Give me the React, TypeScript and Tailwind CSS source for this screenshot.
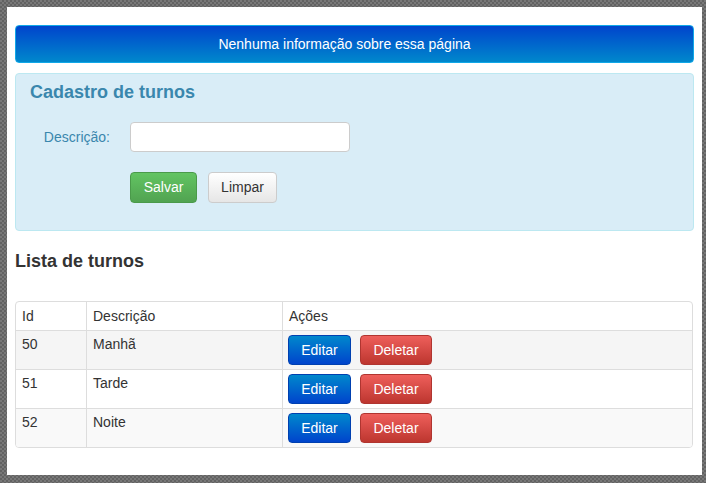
import React from 'react';

const turnos = [
  { id: 50, descricao: 'Manhã', bg: 'bg-[#f5f5f5]' },
  { id: 51, descricao: 'Tarde', bg: 'bg-white' },
  { id: 52, descricao: 'Noite', bg: 'bg-[#f9f9f9]' },
];

export default function App() {
  return (
    <div className="w-[706px] h-[483px] p-[7px] pr-[4px] pb-[8px] bg-[#6d6d6d] bg-[image:repeating-conic-gradient(#626262_0_25%,#787878_0_50%)] bg-[length:4px_4px] font-['Liberation_Sans',Arial,sans-serif] text-[14px] text-[#333]">
      <div className="h-full bg-white px-[8px] pt-[18px]">
        <div className="h-[38px] flex items-center justify-center pr-[20px] rounded-[4px] border border-[#10a8e8] bg-[linear-gradient(to_bottom,#0044cc,#0088cc)] text-white">
          Nenhuma informação sobre essa página
        </div>

        <div className="mt-[10px] h-[158px] rounded-[4px] border border-[#bce8f1] bg-[#d9edf7] px-[14px] pt-[6px]">
          <h2 className="text-[18px] font-bold text-[#3a87ad] leading-[24px]">Cadastro de turnos</h2>
          <div className="mt-[18px] flex items-center">
            <label className="w-[100px] text-right pr-[20px] text-[#3a87ad]">Descrição:</label>
            <input className="w-[220px] h-[30px] rounded-[4px] border border-[#ccc] bg-white outline-none" />
          </div>
          <div className="mt-[20px] ml-[100px] flex gap-[11px]">
            <button className="w-[67px] h-[31px] rounded-[4px] border border-[#4a9a4a] bg-[linear-gradient(to_bottom,#62c462,#51a351)] text-white">
              Salvar
            </button>
            <button className="w-[69px] h-[31px] rounded-[4px] border border-[#ccc] bg-[linear-gradient(to_bottom,#ffffff,#e6e6e6)] text-[#333]">
              Limpar
            </button>
          </div>
        </div>

        <h2 className="mt-[18px] text-[18px] font-bold leading-[24px] text-[#333]">Lista de turnos</h2>

        <table className="mt-[28px] w-[678px] border-separate border-spacing-0 rounded-[4px] border border-[#ddd] overflow-hidden">
          <thead>
            <tr className="h-[28px]">
              <th className="w-[70px] text-left font-normal px-[6px] align-middle">Id</th>
              <th className="w-[196px] text-left font-normal px-[6px] border-l border-[#ddd] align-middle">Descrição</th>
              <th className="text-left font-normal px-[6px] border-l border-[#ddd] align-middle">Ações</th>
            </tr>
          </thead>
          <tbody>
            {turnos.map((t) => (
              <tr key={t.id} className={`h-[39px] ${t.bg}`}>
                <td className="px-[6px] pt-[3px] align-top border-t border-[#ddd]">{t.id}</td>
                <td className="px-[6px] pt-[3px] align-top border-t border-l border-[#ddd]">{t.descricao}</td>
                <td className="px-[5px] pt-[4px] pb-[4px] align-top border-t border-l border-[#ddd]">
                  <div className="flex gap-[9px]">
                    <button className="w-[63px] h-[30px] rounded-[4px] border border-[#0040b0] bg-[linear-gradient(to_bottom,#0088cc,#0044cc)] text-white">
                      Editar
                    </button>
                    <button className="w-[72px] h-[30px] rounded-[4px] border border-[#b03530] bg-[linear-gradient(to_bottom,#ee5f5b,#bd362f)] text-white">
                      Deletar
                    </button>
                  </div>
                </td>
              </tr>
            ))}
          </tbody>
        </table>
      </div>
    </div>
  );
}
